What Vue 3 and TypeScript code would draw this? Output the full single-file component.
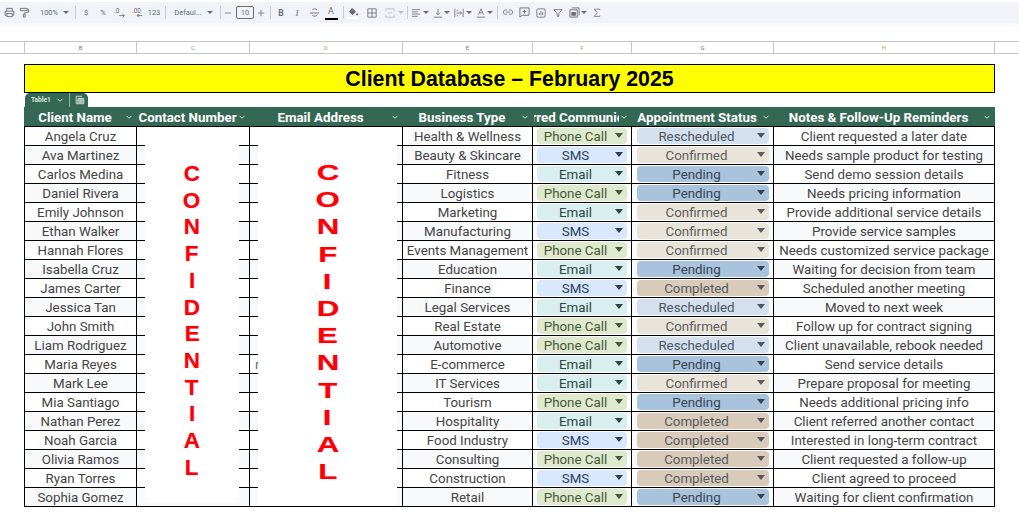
<script setup lang="ts">
type Tool = { c: number; w: number; kind: string; label?: string };
const tools: Tool[] = [
  { c: 9, w: 11, kind: 'print' }, { c: 24, w: 11, kind: 'paint' },
  { c: 49, w: 20, kind: 'text', label: '100%' }, { c: 66, w: 6, kind: 'caret' }, { c: 75, w: 1, kind: 'sep' },
  { c: 86, w: 8, kind: 'text', label: '$' }, { c: 103, w: 10, kind: 'text', label: '%' },
  { c: 120, w: 12, kind: 'dec0' }, { c: 138, w: 12, kind: 'dec2' }, { c: 154, w: 14, kind: 'text', label: '123' },
  { c: 165, w: 1, kind: 'sep' }, { c: 188, w: 32, kind: 'text', label: 'Defaul...' }, { c: 210, w: 6, kind: 'caret' },
  { c: 220, w: 1, kind: 'sep' }, { c: 228, w: 8, kind: 'minus' }, { c: 245, w: 18, kind: 'size', label: '10' },
  { c: 261, w: 8, kind: 'plus' }, { c: 270, w: 1, kind: 'sep' }, { c: 281, w: 8, kind: 'bold', label: 'B' },
  { c: 297, w: 8, kind: 'ital', label: 'I' }, { c: 314, w: 11, kind: 'strike' }, { c: 331, w: 13, kind: 'acolor' },
  { c: 343, w: 1, kind: 'sep' }, { c: 353, w: 12, kind: 'fill' }, { c: 372, w: 10, kind: 'borders' },
  { c: 390, w: 10, kind: 'merge' }, { c: 401, w: 6, kind: 'caretl' }, { c: 407, w: 1, kind: 'sep' },
  { c: 416, w: 10, kind: 'align' }, { c: 426, w: 6, kind: 'caret' }, { c: 438, w: 10, kind: 'valign' },
  { c: 447, w: 6, kind: 'caret' }, { c: 459, w: 10, kind: 'wrap' }, { c: 469, w: 6, kind: 'caret' },
  { c: 481, w: 10, kind: 'rotate' }, { c: 490, w: 6, kind: 'caret' }, { c: 497, w: 1, kind: 'sep' },
  { c: 508, w: 12, kind: 'link' }, { c: 524, w: 11, kind: 'comment' }, { c: 541, w: 10, kind: 'chart' },
  { c: 558, w: 10, kind: 'filter' }, { c: 574, w: 11, kind: 'view' }, { c: 584, w: 6, kind: 'caret' },
  { c: 597, w: 8, kind: 'sigma' },
];
function toolMargin(i: number): string {
  const left = tools[i].c - tools[i].w / 2;
  const prev = i === 0 ? 0 : tools[i - 1].c + tools[i - 1].w / 2;
  return `${left - prev}px`;
}
const colLetters = [
  { l: 'B', cls: 'gray' }, { l: 'C', cls: 'blue' }, { l: 'D', cls: 'orange' }, { l: 'E', cls: 'gray' },
  { l: 'F', cls: 'orange' }, { l: 'G', cls: 'gray' }, { l: 'H', cls: 'orange' },
];
const headers = ['Client Name', 'Contact Number', 'Email Address', 'Business Type', 'Preferred Communication', 'Appointment Status', 'Notes & Follow-Up Reminders'];
const P = 'Phone Call', E = 'Email', S = 'SMS';
const R = 'Rescheduled', C = 'Confirmed', N = 'Pending', D = 'Completed';
const rows: [string, string, string, string, string][] = [
  ['Angela Cruz', 'Health & Wellness', P, R, 'Client requested a later date'],
  ['Ava Martinez', 'Beauty & Skincare', S, C, 'Needs sample product for testing'],
  ['Carlos Medina', 'Fitness', E, N, 'Send demo session details'],
  ['Daniel Rivera', 'Logistics', P, N, 'Needs pricing information'],
  ['Emily Johnson', 'Marketing', E, C, 'Provide additional service details'],
  ['Ethan Walker', 'Manufacturing', S, C, 'Provide service samples'],
  ['Hannah Flores', 'Events Management', P, C, 'Needs customized service package'],
  ['Isabella Cruz', 'Education', E, N, 'Waiting for decision from team'],
  ['James Carter', 'Finance', S, D, 'Scheduled another meeting'],
  ['Jessica Tan', 'Legal Services', E, R, 'Moved to next week'],
  ['John Smith', 'Real Estate', P, C, 'Follow up for contract signing'],
  ['Liam Rodriguez', 'Automotive', P, R, 'Client unavailable, rebook needed'],
  ['Maria Reyes', 'E-commerce', E, N, 'Send service details'],
  ['Mark Lee', 'IT Services', E, C, 'Prepare proposal for meeting'],
  ['Mia Santiago', 'Tourism', P, N, 'Needs additional pricing info'],
  ['Nathan Perez', 'Hospitality', E, D, 'Client referred another contact'],
  ['Noah Garcia', 'Food Industry', S, D, 'Interested in long-term contract'],
  ['Olivia Ramos', 'Consulting', P, D, 'Client requested a follow-up'],
  ['Ryan Torres', 'Construction', S, D, 'Client agreed to proceed'],
  ['Sophia Gomez', 'Retail', P, N, 'Waiting for client confirmation'],
];
const letters = 'CONFIDENTIAL'.split('');
function pillClass(v: string): string {
  return 'p-' + v.split(' ')[0].toLowerCase();
}
</script>

<template>
  <div class="page">
    <div class="toolbar">
      <template v-for="(t, i) in tools" :key="i">
        <div class="tool" :class="'k-' + t.kind" :style="{ width: t.w + 'px', marginLeft: toolMargin(i) }">
          <span v-if="t.label">{{ t.label }}</span>
          <svg v-else-if="t.kind === 'print'" viewBox="0 0 12 12"><path d="M3 4V1.5h6V4M3 9H1.2V4.5h9.6V9H9M3 7.2h6v3.3H3z" /></svg>
          <svg v-else-if="t.kind === 'paint'" viewBox="0 0 12 12"><path d="M1.5 1.5h7.5v2.5H1.500zM9 2.700h1.500v2.800L5.800 6.500v1.200M4.800 7.800h2v3.200h-2z" /></svg>
          <svg v-else-if="t.kind === 'dec0'" viewBox="0 0 14 12"><text x="0" y="7" class="mini">.0</text><path d="M6 10h6M10 8l2 2-2 2" /></svg>
          <svg v-else-if="t.kind === 'dec2'" viewBox="0 0 14 12"><text x="0" y="7" class="mini">.00</text><path d="M12 10H6M8 8l-2 2 2 2" /></svg>
          <svg v-else-if="t.kind === 'minus'" viewBox="0 0 10 10"><path d="M1 5h8" /></svg>
          <svg v-else-if="t.kind === 'plus'" viewBox="0 0 10 10"><path d="M1 5h8M5 1v8" /></svg>
          <svg v-else-if="t.kind === 'strike'" viewBox="0 0 12 12"><path d="M1 6.500h10M8.800 3.200C8 1.800 4 1.500 3.500 3.500M3.500 9c1 1.500 5.500 1.500 5.500-.8" /></svg>
          <svg v-else-if="t.kind === 'fill'" viewBox="0 0 12 12"><path class="solid" d="M5 .8l4 4-3.500 3.500L2 4.800z" /><path class="solid" d="M10 5.500l1 2a1 1 0 1 1-2 0z" /><rect class="white" x="0" y="10.300" width="12" height="1.700" /></svg>
          <svg v-else-if="t.kind === 'borders'" viewBox="0 0 12 12"><path d="M1 1h10v10H1zM1 6h10M6 1v10" /></svg>
          <svg v-else-if="t.kind === 'merge'" class="faded" viewBox="0 0 12 12"><path d="M1 4V1h10v3M1 8v3h10V8M3.500 6h5" /></svg>
          <svg v-else-if="t.kind === 'align'" viewBox="0 0 12 12"><path d="M1 2h10M1 4.700h7M1 7.300h10M1 10h7" /></svg>
          <svg v-else-if="t.kind === 'valign'" viewBox="0 0 12 12"><path d="M1 11h10M6 1v7M3.500 5.500L6 8l2.500-2.500" /></svg>
          <svg v-else-if="t.kind === 'wrap'" viewBox="0 0 12 12"><path d="M1 1v10M11 1v10M4 2v2M4 8v2M3 6h6M7 4l2 2-2 2" /></svg>
          <svg v-else-if="t.kind === 'rotate'" viewBox="0 0 12 12"><path d="M3 8l3-7 3 7M4 5.800h4M1 11h10" /></svg>
          <svg v-else-if="t.kind === 'link'" viewBox="0 0 14 12"><path d="M6 3.500H4a2.500 2.500 0 0 0 0 5h2M8 3.500h2a2.500 2.500 0 0 1 0 5H8M4.500 6h5" /></svg>
          <svg v-else-if="t.kind === 'comment'" viewBox="0 0 12 12"><path d="M1 1h10v8H3.500L1 11zM6 3v4M4 5h4" /></svg>
          <svg v-else-if="t.kind === 'chart'" viewBox="0 0 12 12"><rect x="1" y="1" width="10" height="10" rx="1.500" /><path d="M4 8.500V6M6 8.500V3.500M8 8.500V5" /></svg>
          <svg v-else-if="t.kind === 'filter'" viewBox="0 0 12 12"><path d="M1 2h10L7 6.500V10H5V6.500z" /></svg>
          <svg v-else-if="t.kind === 'view'" viewBox="0 0 12 12"><path d="M3 1h8v8M1 3h8v8H1z" /><path class="solid" d="M2.500 5.500h5v4h-5z" /></svg>
          <svg v-else-if="t.kind === 'sigma'" viewBox="0 0 10 12"><path d="M8.500 2.500V1.500h-7L5.500 6l-4 4.500h7v-1" /></svg>
        </div>
      </template>
    </div>
    <div class="toolbar-foot"></div>

    <div class="col-head">
      <div class="corner"></div>
      <div v-for="c in colLetters" :key="c.l" class="col-letter" :class="c.cls">{{ c.l }}</div>
    </div>

    <div class="sheet">
      <h1 class="title">Client Database – February 2025</h1>

      <div class="tab">
        <span class="tab-name">Table1</span>
        <svg class="chev tab-chev" viewBox="0 0 8 8"><path d="M1.500 2.800L4 5.300l2.500-2.500" /></svg>
        <span class="tab-sep"></span>
        <svg class="tab-icon" viewBox="0 0 12 12"><path d="M1.500 1.500h7M1.500 1.500v9h2M3.500 4h7v6.500h-7zM3.500 6h7M3.500 8.200h7M6 4v6.500M8.300 4v6.500" /></svg>
      </div>

      <div class="table-wrap">
        <div class="row head">
          <div v-for="h in headers" :key="h" class="hcell">
            <div class="hclip"><span class="hlabel">{{ h }}</span></div>
            <svg class="chev" viewBox="0 0 8 8"><path d="M1.500 2.800L4 5.300l2.500-2.500" /></svg>
          </div>
        </div>
        <div v-for="(r, ri) in rows" :key="r[0]" class="row" :class="{ alt: ri % 2 === 1 }">
          <div class="cell">{{ r[0] }}</div>
          <div class="cell"></div>
          <div class="cell email"><span v-if="r[0] === 'Maria Reyes'" class="stub">r</span></div>
          <div class="cell">{{ r[1] }}</div>
          <div class="cell pcell">
            <div class="pill" :class="pillClass(r[2])"><span>{{ r[2] }}</span><i class="tri"></i></div>
          </div>
          <div class="cell pcell status">
            <div class="pill" :class="pillClass(r[3])"><span>{{ r[3] }}</span><i class="tri"></i></div>
          </div>
          <div class="cell">{{ r[4] }}</div>
        </div>

        <div class="mask mask-a">
          <span v-for="(l, i) in letters" :key="i">{{ l }}</span>
        </div>
        <div class="mask mask-b">
          <span v-for="(l, i) in letters" :key="i">{{ l }}</span>
        </div>
      </div>
    </div>
  </div>
</template>

<style>
html, body { margin: 0; background: #fff; overflow: hidden; }
</style>

<style scoped>
.page { width: 1019px; height: 527px; overflow: hidden; font-family: Roboto, "Liberation Sans", sans-serif; color: #444; }

.toolbar { margin-top: 2px; height: 21px; background: #f0f4f9; display: flex; align-items: center; color: #6a6e72; font-size: 7.5px; }
.toolbar-foot { height: 4px; background: #f9fbfd; margin-bottom: 14px; }
.tool { flex: none; display: flex; align-items: center; justify-content: center; white-space: nowrap; }
.tool svg { width: 100%; display: block; fill: none; stroke: #6a6e72; stroke-width: 1; overflow: visible; }
.tool svg .solid { fill: #6a6e72; stroke: none; }
.tool svg .white { fill: #fff; stroke: none; }
.tool svg .mini { font: 7.500px Roboto, sans-serif; fill: #6a6e72; stroke: none; }
.tool svg.faded { opacity: .4; }
.k-sep { height: 13px; background: #c7cbcf; }
.k-caret, .k-caretl { height: 0; border-left: 3px solid transparent; border-right: 3px solid transparent; border-top: 3px solid #6a6e72; box-sizing: border-box; }
.k-caretl { opacity: .4; }
.k-size { height: 13px; border: 1px solid #6b6f72; border-radius: 2px; box-sizing: border-box; }
.k-bold { font-weight: 700; font-size: 8.500px; }
.k-ital { font-style: italic; font-size: 9px; font-family: "Liberation Serif", serif; }
.k-acolor { height: 14px; box-sizing: border-box; border-bottom: 2px solid #000; font-size: 9px; align-items: flex-start; }
.k-acolor::before { content: "A"; }

.col-head { display: flex; height: 13px; padding-left: 24px; border-top: 1px solid #c4c7c5; border-bottom: 1px solid #c4c7c5; box-sizing: border-box; }
.corner { width: 0; border-left: 1px solid #c4c7c5; }
.col-letter { display: flex; align-items: center; justify-content: center; box-sizing: border-box; border-right: 1px solid #c4c7c5; font-size: 6px; color: #777; }
.col-letter.blue { color: #6f8fc9; }
.col-letter.orange { color: #c79a5c; }
.col-letter:nth-child(2) { width: 112px; }
.col-letter:nth-child(3) { width: 113px; }
.col-letter:nth-child(4) { width: 153px; }
.col-letter:nth-child(5) { width: 130px; }
.col-letter:nth-child(6) { width: 99px; }
.col-letter:nth-child(7) { width: 142px; }
.col-letter:nth-child(8) { width: 221px; }

.sheet { padding: 10px 0 0 24px; width: 971px; }
.title { margin: 0; height: 29px; box-sizing: border-box; border: 1px solid #000; background: #ff0; font: 700 21.330px/29px "Liberation Sans", sans-serif; color: #000; text-align: center; }

.tab { margin: 0 0 0 1px; width: 63px; height: 14px; box-sizing: border-box; background: #356854; border-radius: 5px 5px 0 0; display: flex; align-items: center; color: #fff; }
.tab-name { font-size: 6.500px; font-weight: 700; margin-left: 6px; width: 24px; color: #dfe9e4; }
.tab-chev { margin-left: 1px; }
.tab-sep { width: 1px; height: 14px; background: #8fb0a2; margin-left: 5px; }
.tab-icon { width: 10px; height: 10px; margin-left: 5px; fill: none; stroke: #e3ece8; stroke-width: 1; }

.table-wrap { position: relative; width: 971px; }
.row { display: grid; grid-template-columns: 112px 113px 153px 130px 99px 142px 221px; height: 19px; box-sizing: border-box; border-left: 1px solid #000; border-bottom: 1px solid #000; background: #fff; }
.row.alt { background: #f8f9fa; }
.row.head { height: 20px; background: #356854; border-left: 0; padding-left: 1px; }
.cell { border-right: 1px solid #000; display: flex; align-items: center; justify-content: center; font-size: 13.330px; white-space: nowrap; overflow: hidden; min-width: 0; color: #444; }
.cell.email { justify-content: flex-start; padding-left: 5px; }
.stub { color: #5a6d80; }
.pcell { padding: 1px 4px; box-sizing: border-box; }
.pcell.status { padding-left: 5px; }
.pill { flex: 1; height: 16px; border-radius: 4px; display: flex; align-items: center; justify-content: center; position: relative; padding-right: 13px; }
.tri { position: absolute; right: 4px; top: 5px; border-left: 4px solid transparent; border-right: 4px solid transparent; border-top: 5px solid currentColor; }
.p-phone { background: #dfe9cd; color: #47583a; }
.p-email { background: #d9eeee; color: #2b4a3f; }
.p-sms { background: #d9e8fd; color: #2d3f5a; }
.p-rescheduled { background: #d5e0ee; color: #4a5563; }
.p-confirmed { background: #e8e4d9; color: #5c5c5c; }
.p-pending { background: #a9c3dd; color: #36454f; }
.p-completed { background: #d9cbb9; color: #55595f; }

.hcell { display: flex; align-items: center; position: relative; color: #fff; font-weight: 700; font-size: 13.330px; padding: 1px 13px 0 1px; min-width: 0; white-space: nowrap; }
.hclip { flex: 1; min-width: 0; overflow: hidden; display: flex; justify-content: center; }
.hlabel { flex: none; }
.hcell .chev { position: absolute; right: 4px; top: 6px; }
.chev { width: 8px; height: 8px; flex: none; fill: none; stroke: #d6e2dc; stroke-width: 1; }

.mask { position: absolute; top: 20px; background: #fff; display: flex; flex-direction: column; align-items: center; font: 700 22px/26.700px "Liberation Sans", sans-serif; color: #f00; text-shadow: 0 0 1px rgba(255, 60, 160, .6); box-sizing: border-box; }
.mask-a { left: 121px; width: 94px; height: 376px; padding-top: 34px; }
.mask-a span { transform: scaleX(1.02); }
.mask-b { left: 234px; width: 139px; height: 378px; padding-top: 32px; line-height: 27.200px; }
.mask-b span { transform: scaleX(1.42); }
</style>
